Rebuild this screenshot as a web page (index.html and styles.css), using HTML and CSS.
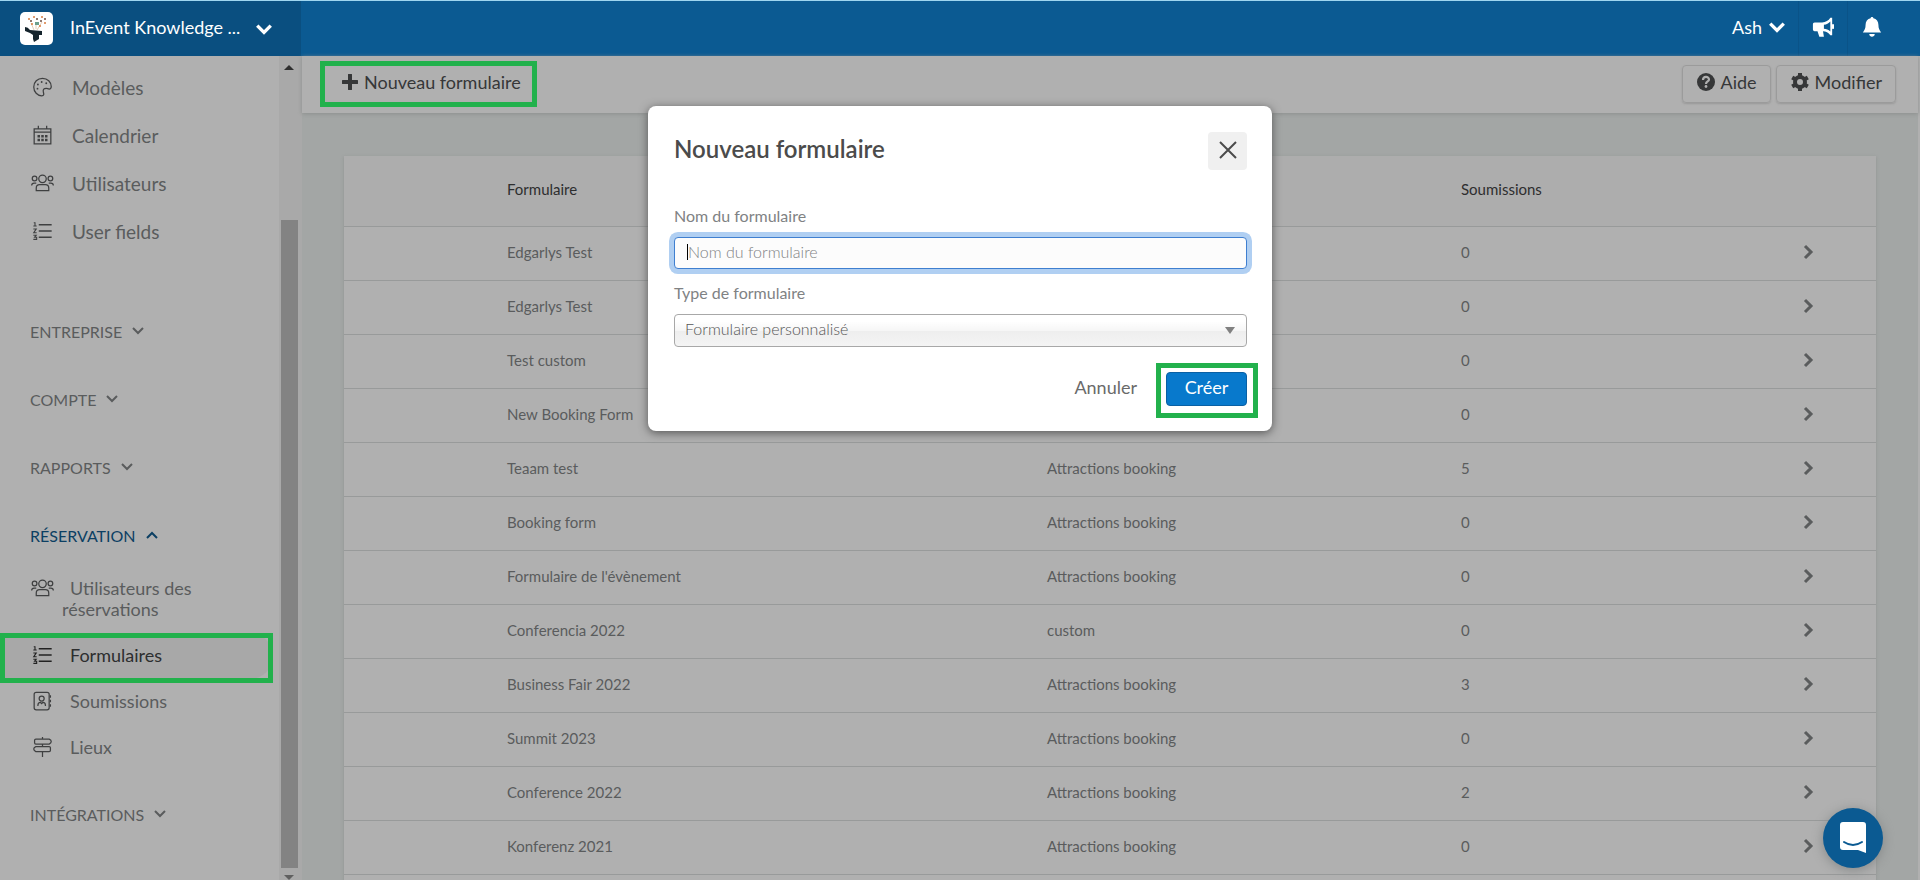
FILE: index.html
```html
<!DOCTYPE html>
<html lang="fr">
<head>
<meta charset="utf-8">
<title>Formulaires</title>
<link rel="stylesheet" href="styles.css">
</head>
<body>
<svg class="defs" aria-hidden="true">
  <symbol id="chev" viewBox="0 0 16 16"><path d="M2 5l6 6 6-6" fill="none" stroke="currentColor" stroke-width="3"/></symbol>
  <symbol id="chev-thin" viewBox="0 0 16 16"><path d="M3 5l5 5 5-5" fill="none" stroke="currentColor" stroke-width="2"/></symbol>
  <symbol id="next" viewBox="0 0 16 16"><path d="M5 2l6 6-6 6" fill="none" stroke="currentColor" stroke-width="3"/></symbol>
  <symbol id="palette" viewBox="0 0 24 24"><path d="M12 1.500C6 1.500 1.500 6 1.500 12S6 22.500 11 22.500c3.500 0 2.500-2.500 2-4.500-.7-3 .8-4.500 3.500-4.500 1.500 0 2 1 3.500 1s2.500-1 2.500-3C22.500 6 18 1.500 12 1.500z" fill="none" stroke="currentColor" stroke-width="1.500"/><g fill="currentColor"><circle cx="6" cy="14" r="1.100"/><circle cx="6.500" cy="9" r="1.100"/><circle cx="11" cy="6" r="1.100"/><circle cx="16.500" cy="7.500" r="1.100"/></g></symbol>
  <symbol id="calendar" viewBox="0 0 24 24"><path d="M2 4.500h20v18H2zM2 8.500h20M7 1v3.500M17 1v3.500" fill="none" stroke="currentColor" stroke-width="1.500"/><path d="M6 12h3v3H6zM10.500 12h3v3h-3zM15 12h3v3h-3zM6 16.500h3v3H6zM10.500 16.500h3v3h-3zM15 16.500h3v3h-3z" fill="currentColor"/></symbol>
  <symbol id="users" viewBox="0 0 28 24"><g fill="none" stroke="currentColor" stroke-width="1.500"><circle cx="14" cy="7" r="4.500"/><circle cx="4.500" cy="6.500" r="2.800"/><circle cx="23.500" cy="6.500" r="2.800"/><path d="M6.500 21v-3c0-2.500 2-4 4-4h7c2 0 4 1.500 4 4v3zM1 15c0-2 1.500-3 3-3h2.500M27 15c0-2-1.500-3-3-3h-2.500"/></g></symbol>
  <symbol id="list" viewBox="0 0 24 24"><path d="M7.500 4.500H23M7.500 12H23M7.500 19.500H23" fill="none" stroke="currentColor" stroke-width="2"/><path d="M1.500 2h1.500v4M1 6h4M1 9.500h3.500L1.500 14H5M1 17h3.500l-2 2.500H5v2.500H1" fill="none" stroke="currentColor" stroke-width="1.300"/></symbol>
  <symbol id="contact" viewBox="0 0 24 24"><g fill="none" stroke="currentColor" stroke-width="1.500"><rect x="2" y="1.500" width="18" height="21" rx="2.500"/><circle cx="11" cy="9" r="3"/><path d="M6.500 18v-1c0-2 1.500-3.500 3-3.500L11 15l1.500-1.500c1.500 0 3 1.500 3 3.500v1M21.500 5v3M21.500 10.500v3M21.500 16v3"/></g></symbol>
  <symbol id="signs" viewBox="0 0 24 24"><g fill="none" stroke="currentColor" stroke-width="1.500"><path d="M4 2.500h16q2.500 1 2.500 3T20 8.500H4q-1.500 0-1.500-1.500V4q0-1.500 1.500-1.500zM20 11.500H4q-2.500 1-2.500 3t2.500 3h16q1.500 0 1.500-1.500v-3q0-1.500-1.500-1.500zM12 0v2.500M12 8.500v3M12 17.500V24"/></g></symbol>
</svg>

<div class="app">
  <header class="topbar">
    <button class="brand" type="button">
      <svg class="logo" viewBox="0 0 33 33"><rect width="33" height="33" rx="5" fill="#fff"/><path d="M5 15q3 0 5 3l12 1v4h-3v4l-5 3-1-3v-4l-3-2-5-2z" fill="#15242d"/><path d="M14 18l-3-7M17 18l5-8M16 17v-7" stroke="#e6cdb6" fill="none"/><rect x="15" y="10" width="4" height="3" fill="#6c9e8c"/><g fill="#d97b3e"><circle cx="9" cy="7" r="1"/><circle cx="14" cy="5" r="1"/><circle cx="22" cy="5" r="1"/><circle cx="25" cy="11" r="1"/><circle cx="20" cy="14" r="1"/><circle cx="12" cy="12" r="1"/></g><g fill="#6a4d42"><circle cx="11" cy="9" r="1"/><circle cx="17" cy="7" r="1"/><circle cx="21" cy="9" r="1"/><circle cx="25" cy="7" r="1"/></g></svg>
      <span class="brand-name">InEvent Knowledge ...</span>
      <svg class="i18"><use href="#chev"/></svg>
    </button>
    <div class="tools">
      <button class="tool user" type="button">Ash <svg class="i18"><use href="#chev"/></svg></button>
      <button class="tool" type="button" aria-label="Annonces"><svg class="i22" viewBox="0 0 24 24"><path d="M3 7h8c4 0 7-2 9-5h2v19h-2c-2-3-5-4.500-8-4.500l1 6H8l-2-6H3c-1.500 0-2-1-2-2V9c0-1 .5-2 2-2z" fill="#fff"/><path d="M20 6v11c-2-2-4.500-3-7-3V9.500c3 0 5-1.500 7-3.500z" fill="#0b5a92"/><rect x="21" y="9" width="3" height="5" fill="#fff"/></svg></button>
      <button class="tool" type="button" aria-label="Notifications"><svg class="i22" viewBox="0 0 24 24"><path d="M12 1c1 0 1.500.7 1.500 1.500 3.500.8 5.500 3.500 5.500 7 0 4 1 5.500 3 8.500H2c2-3 3-4.500 3-8.500 0-3.500 2-6.200 5.500-7C10.500 1.700 11 1 12 1zM9 19.500h6c0 2-1.500 3-3 3s-3-1-3-3z" fill="#fff"/></svg></button>
    </div>
  </header>

  <div class="body">
    <aside class="side">
      <nav class="nav">
        <ul class="menu">
          <li><a href="#"><svg class="ico"><use href="#palette"/></svg>Modèles</a></li>
          <li><a href="#"><svg class="ico"><use href="#calendar"/></svg>Calendrier</a></li>
          <li><a href="#"><svg class="ico"><use href="#users"/></svg>Utilisateurs</a></li>
          <li><a href="#"><svg class="ico"><use href="#list"/></svg>User fields</a></li>
        </ul>
        <button class="group" type="button">ENTREPRISE <svg class="i16"><use href="#chev-thin"/></svg></button>
        <button class="group" type="button">COMPTE <svg class="i16"><use href="#chev-thin"/></svg></button>
        <button class="group" type="button">RAPPORTS <svg class="i16"><use href="#chev-thin"/></svg></button>
        <button class="group open" type="button">RÉSERVATION <svg class="i16"><use href="#chev-thin"/></svg></button>
        <ul class="menu sub">
          <li><a class="wrap" href="#"><svg class="ico"><use href="#users"/></svg><span class="label">Utilisateurs des réservations</span></a></li>
          <li class="marked"><a class="current" href="#"><svg class="ico"><use href="#list"/></svg>Formulaires</a></li>
          <li><a href="#"><svg class="ico"><use href="#contact"/></svg>Soumissions</a></li>
          <li><a href="#"><svg class="ico"><use href="#signs"/></svg>Lieux</a></li>
        </ul>
        <button class="group" type="button">INTÉGRATIONS <svg class="i16"><use href="#chev-thin"/></svg></button>
      </nav>
      <div class="scroll" aria-hidden="true"><i class="up"></i><i class="track"><i class="thumb"></i></i><i class="down"></i></div>
    </aside>

    <main class="main">
      <div class="actions">
        <button class="new" type="button"><svg class="i16" viewBox="0 0 16 16"><path d="M8 1v14M1 8h14" stroke="currentColor" stroke-width="4" stroke-linecap="round"/></svg>Nouveau formulaire</button>
        <button class="btn" type="button"><svg class="i18" viewBox="0 0 18 18"><circle cx="9" cy="9" r="9" fill="currentColor"/><path d="M6 7c0-4 6-4 6-.5C12 8.500 9 8.500 9 11" fill="none" stroke="#b0b0b0" stroke-width="2.200"/><circle cx="9" cy="13.500" r="1.400" fill="#b0b0b0"/></svg>Aide</button>
        <button class="btn" type="button"><svg class="i18" viewBox="0 0 18 18"><circle cx="9" cy="9" r="5" fill="none" stroke="currentColor" stroke-width="4"/><path d="M9 0v4M9 14v4M1.200 4.500l3.500 2M13.300 11.500l3.500 2M1.200 13.500l3.500-2M13.300 6.500l3.500-2" stroke="currentColor" stroke-width="4"/></svg>Modifier</button>
      </div>
      <div class="content">
        <table class="table">
          <colgroup><col class="c0"><col class="c1"><col class="c2"><col class="c3"><col></colgroup>
          <thead><tr><th></th><th>Formulaire</th><th>Type</th><th>Soumissions</th><th></th></tr></thead>
          <tbody>
            <tr><td></td><td>Edgarlys Test</td><td>custom</td><td>0</td><td><svg class="i16"><use href="#next"/></svg></td></tr>
            <tr><td></td><td>Edgarlys Test</td><td>custom</td><td>0</td><td><svg class="i16"><use href="#next"/></svg></td></tr>
            <tr><td></td><td>Test custom</td><td>custom</td><td>0</td><td><svg class="i16"><use href="#next"/></svg></td></tr>
            <tr><td></td><td>New Booking Form</td><td>custom</td><td>0</td><td><svg class="i16"><use href="#next"/></svg></td></tr>
            <tr><td></td><td>Teaam test</td><td>Attractions booking</td><td>5</td><td><svg class="i16"><use href="#next"/></svg></td></tr>
            <tr><td></td><td>Booking form</td><td>Attractions booking</td><td>0</td><td><svg class="i16"><use href="#next"/></svg></td></tr>
            <tr><td></td><td>Formulaire de l'évènement</td><td>Attractions booking</td><td>0</td><td><svg class="i16"><use href="#next"/></svg></td></tr>
            <tr><td></td><td>Conferencia 2022</td><td>custom</td><td>0</td><td><svg class="i16"><use href="#next"/></svg></td></tr>
            <tr><td></td><td>Business Fair 2022</td><td>Attractions booking</td><td>3</td><td><svg class="i16"><use href="#next"/></svg></td></tr>
            <tr><td></td><td>Summit 2023</td><td>Attractions booking</td><td>0</td><td><svg class="i16"><use href="#next"/></svg></td></tr>
            <tr><td></td><td>Conference 2022</td><td>Attractions booking</td><td>2</td><td><svg class="i16"><use href="#next"/></svg></td></tr>
            <tr><td></td><td>Konferenz 2021</td><td>Attractions booking</td><td>0</td><td><svg class="i16"><use href="#next"/></svg></td></tr>
            <tr><td></td><td></td><td></td><td></td><td></td></tr>
          </tbody>
        </table>
      </div>
    </main>
  </div>
</div>

<form class="modal" role="dialog" aria-labelledby="dlg-title">
  <div class="modal-head">
    <h2 id="dlg-title">Nouveau formulaire</h2>
    <button class="close" type="button" aria-label="Fermer"><svg class="i18" viewBox="0 0 18 18"><path d="M1 1l16 16M17 1L1 17" stroke="currentColor" stroke-width="2"/></svg></button>
  </div>
  <label for="name">Nom du formulaire</label>
  <div class="field"><input id="name" type="text" placeholder="Nom du formulaire"><i class="caret"></i></div>
  <label for="kind">Type de formulaire</label>
  <div class="field"><select id="kind"><option>Formulaire personnalisé</option></select><i class="arrow"></i></div>
  <div class="modal-foot">
    <button class="cancel" type="button">Annuler</button>
    <span class="outline"><button class="create" type="button">Créer</button></span>
  </div>
</form>

<button class="chat" type="button" aria-label="Messagerie"><svg viewBox="0 0 28 32"><path d="M4 0h20q3 0 3 3v28l-8-3H4q-3 0-3-3V3q0-3 3-3z" fill="#fff"/><path d="M5 20q9 6 18 0" fill="none" stroke="#0b5a92" stroke-width="2" stroke-linecap="round"/></svg></button>
</body>
</html>
```
FILE: styles.css
```css
*, *::after { box-sizing: border-box; }
html, body { height: 100%; }
body { margin: 0; overflow: hidden; font-family: Lato, "Liberation Sans", sans-serif; font-size: 18px; color: #5a5c5d; background: #a3a6a5; }
button, input, select { font: inherit; color: inherit; margin: 0; }
button { border: 0; background: none; padding: 0; }
a { color: inherit; text-decoration: none; }
ul { list-style: none; margin: 0; padding: 0; }
svg { flex: none; }
.defs { position: absolute; width: 0; height: 0; }
.i16 { width: 16px; height: 16px; }
.i18 { width: 18px; height: 18px; }
.i22 { width: 22px; height: 22px; }

.app { display: flex; flex-direction: column; height: 100vh; }
.topbar { flex: none; display: flex; justify-content: space-between; height: 56px; background: #0b5a92; border-top: 1px solid #9fd6f0; color: #fff; }
.brand { display: flex; align-items: center; width: 301px; padding: 0 28px 0 20px; background: #0a4f80; }
.logo { width: 33px; height: 33px; }
.brand-name { flex: 1; padding: 0 0 3px 17px; text-align: left; white-space: nowrap; }
.tools { display: flex; padding-right: 24px; }
.tool { display: flex; align-items: center; justify-content: center; width: 49px; padding-bottom: 3px; border-left: 1px solid #0a5388; }
.user { width: auto; gap: 6px; padding-right: 12px; border-left: 0; }

.body { flex: 1; display: flex; min-height: 0; }
.side { flex: none; display: flex; width: 302px; background: #b0b0b0; border-right: 2px solid #a9a9a9; }
.nav { flex: 1; padding-top: 8px; }
.menu a { display: flex; align-items: center; height: 48px; padding: 0 0 2px 30px; gap: 17px; font-size: 19px; }
.ico { width: 25px; height: 20px; color: #3f4041; }
.group { display: flex; align-items: center; gap: 8px; height: 20px; margin-bottom: 48px; padding-left: 30px; font-size: 16px; }
.menu + .group { margin-top: 65px; }
.group.open { color: #0c3f63; margin-bottom: 28px; }
.open svg { transform: rotate(180deg); }
.menu.sub a { height: 46px; gap: 15px; font-size: 18px; }
.menu.sub a.wrap { height: 60px; align-items: flex-start; }
.label { flex: 1; padding: 5px 40px 0 0; line-height: 21px; margin-left: -8px; text-indent: 8px; }
.wrap .ico { margin-top: 5px; }
.marked { position: relative; width: 273px; }
.marked::after { content: ""; position: absolute; top: 0; left: 0; width: 100%; height: 50px; border: 5px solid #22b14c; pointer-events: none; }
.marked .current { border-radius: 0 24px 24px 0; background: #a8a8a8; color: #2d2e2f; }
.marked .ico { color: #222; }
.menu.sub + .group { margin-top: 33px; }
.scroll { display: flex; flex-direction: column; align-items: center; width: 21px; padding: 9px 1px 0 0; background: #a9a9a9; }
.up, .down { border: 5px solid transparent; }
.up { border-top: 0; border-bottom-color: #2f2f2f; }
.down { border-bottom: 0; border-top-color: #606060; }
.track { flex: 1; display: flex; flex-direction: column; width: 17px; padding: 150px 0 7px; }
.thumb { flex: 1; background: #838383; }

.main { flex: 1; display: flex; flex-direction: column; min-width: 0; border-right: 2px solid #b0b0b0; }
.actions { flex: none; display: flex; align-items: center; gap: 5px; height: 57px; padding: 0 22px 2px 18px; background: #b0b0b0; color: #363738; box-shadow: 0 1px 4px #8c8f8e; }
.new, .btn { display: flex; align-items: center; }
.new { gap: 6px; height: 46px; padding: 0 11px 4px 17px; border: 5px solid #22b14c; margin-right: auto; }
.btn { gap: 6px; height: 38px; padding: 0 13px 4px 14px; border: 1px solid #9b9b9b; border-radius: 4px; box-shadow: 0 1px 2px #999; }
.content { flex: 1; min-height: 0; overflow: hidden; padding: 43px 42px 0; }
.table { width: 100%; border-collapse: collapse; table-layout: fixed; background: #b0b0b0; box-shadow: 0 1px 3px #8f9291; font-size: 15px; }
.c0 { width: 163px; }
.c1 { width: 540px; }
.c2 { width: 414px; }
.c3 { width: 336px; }
.table th { height: 70px; padding: 0 0 4px; text-align: left; font-weight: 400; color: #2d2e2f; background: #adadad; border-bottom: 1px solid #989a9a; }
.table td { height: 54px; padding: 0 0 2px; border-bottom: 1px solid #989a9a; }
.table svg { display: block; margin-left: 3px; }

.modal { position: absolute; top: 106px; left: 50%; width: 624px; transform: translateX(-50%); padding: 26px 25px 13px 26px; background: #fff; border-radius: 8px; box-shadow: 0 2px 10px #555; font-size: 16px; color: #808284; }
.modal-head { display: flex; justify-content: space-between; align-items: flex-start; height: 73px; }
h2 { margin: 0; font-size: 24px; line-height: 34px; font-weight: 600; color: #4b4b4b; }
.close { display: grid; place-items: center; width: 39px; height: 38px; padding-bottom: 2px; border-radius: 4px; background: #f0f0f0; color: #4b4b4b; }
.modal label { display: block; line-height: 22px; }
.field { position: relative; margin: 10px 0 13px; }
.field input, .field select { display: block; width: 100%; height: 32px; padding: 0 13px 4px; border: 1px solid #3f7fd0; border-radius: 4px; background: #fcfcfc; font-weight: 300; outline: 0; }
.field input { box-shadow: 0 0 0 5px #b0cff2; }
.field input::placeholder { color: #808284; opacity: 1; }
.field select { appearance: none; height: 33px; padding: 0 10px 4px; border-color: #a8a8a8; color: #555; background: linear-gradient(#fff 20%, #f6f6f6 50%, #eee 52%, #f4f4f4); }
.caret { position: absolute; left: 13px; top: 7px; width: 1px; height: 16px; background: #000; }
.arrow { position: absolute; right: 12px; top: 13px; border: 5px solid transparent; border-top: 7px solid #808080; border-bottom: 0; }
.modal-foot { display: flex; justify-content: flex-end; align-items: center; gap: 19px; margin: 16px -11px 0 0; font-size: 18px; }
.cancel { padding-bottom: 7px; color: #6a6a6a; }
.outline { padding: 4px 6px 7px 5px; border: 5px solid #22b14c; }
.create { display: block; height: 34px; width: 81px; padding-bottom: 4px; border-radius: 4px; background: #0879cc; border: 1px solid #0a60a4; color: #fff; }
.chat { position: fixed; right: 37px; bottom: 12px; display: grid; place-items: center; width: 60px; height: 60px; border-radius: 50%; background: #0b5a92; box-shadow: 0 2px 12px #858888; }
.chat svg { width: 28px; height: 32px; }
```
